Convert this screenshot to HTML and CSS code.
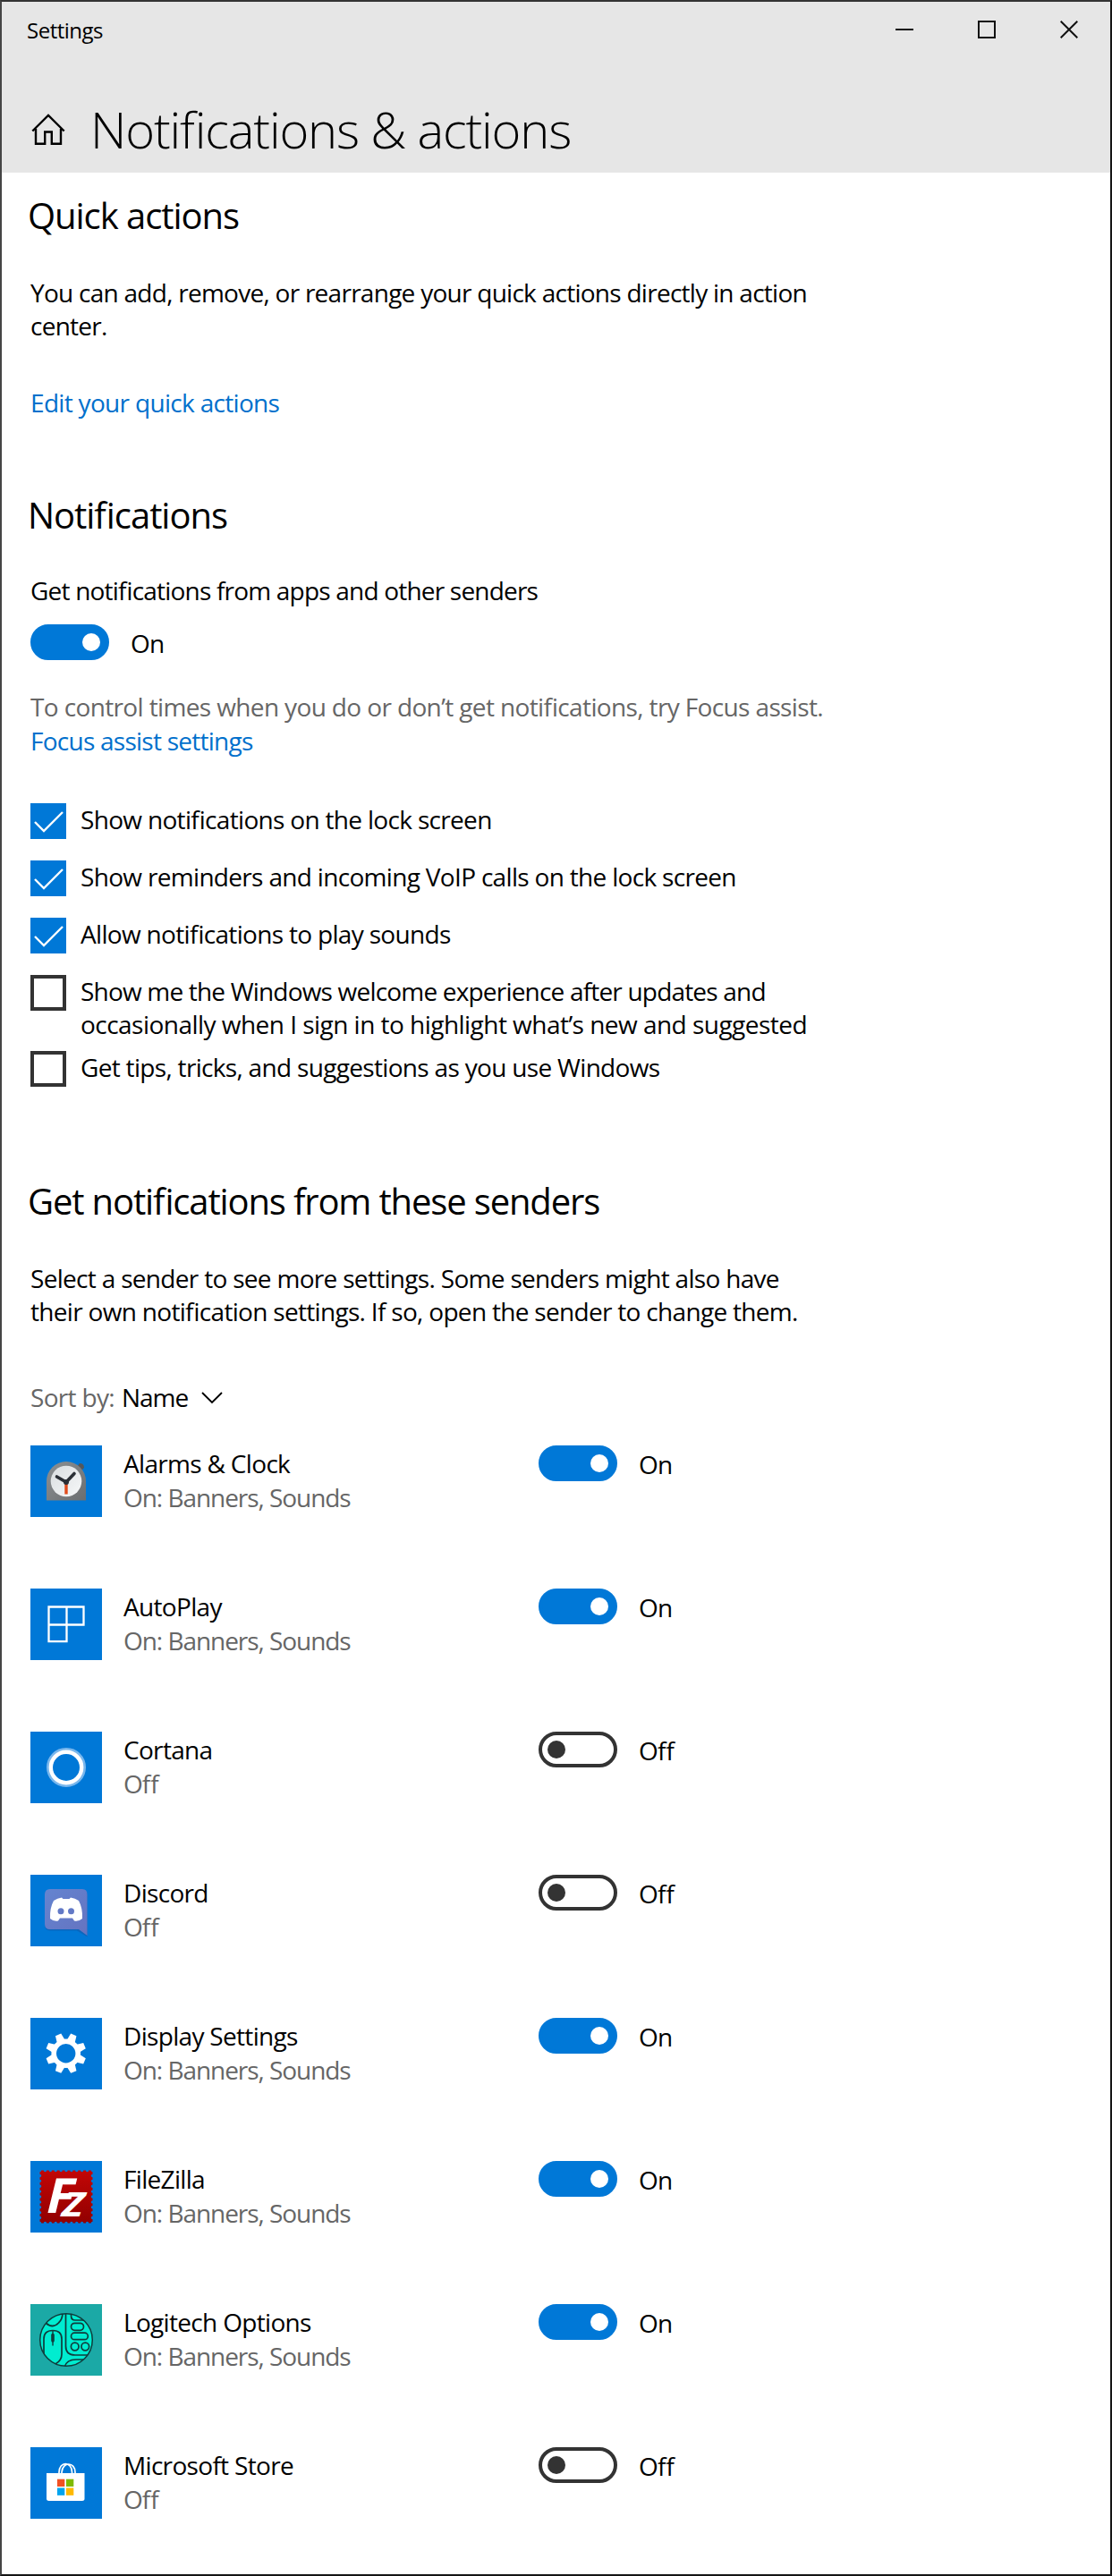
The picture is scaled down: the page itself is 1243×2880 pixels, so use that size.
FILE: index.html
```html
<!DOCTYPE html>
<html lang="en">
<head>
<meta charset="utf-8">
<title>Settings</title>
<link rel="stylesheet" href="styles.css">
</head>
<body>
<div class="window">
  <header class="header">
    <div class="titlebar">
      <span class="app-name">Settings</span>
      <div class="controls">
        <svg width="20" height="20" viewBox="0 0 20 20"><path d="M0 10H20"/></svg>
        <svg width="20" height="20" viewBox="0 0 20 20"><path d="M1 1H19V19H1Z"/></svg>
        <svg width="20" height="20" viewBox="0 0 20 20"><path d="M.7.7L19.3 19.3M19.3.7L.7 19.3"/></svg>
      </div>
    </div>
    <div class="page-title">
      <svg class="home" width="38" height="36" viewBox="0 0 38 36"><path d="M1.3 19.5L19 2L36.7 19.5M5 17V33.8H15.2V20.5H22.8V33.8H33V17"/></svg>
      <h1>Notifications &amp; actions</h1>
    </div>
  </header>
  <main class="content">
    <section class="quick">
      <h2>Quick actions</h2>
      <p class="lead">You can add, remove, or rearrange your quick actions directly in action<br>center.</p>
      <a class="link">Edit your quick actions</a>
    </section>
    <section class="notifications">
      <h2>Notifications</h2>
      <p class="label">Get notifications from apps and other senders</p>
      <div class="switch"><span class="toggle on"></span><span>On</span></div>
      <p class="hint">To control times when you do or don’t get notifications, try Focus assist.</p>
      <a class="link focus-link">Focus assist settings</a>
      <ul class="checks">
        <li><span class="box checked"><svg width="40" height="40" viewBox="0 0 40 40"><path d="M5 21L15 31L36 10"/></svg></span><span>Show notifications on the lock screen</span></li>
        <li><span class="box checked"><svg width="40" height="40" viewBox="0 0 40 40"><path d="M5 21L15 31L36 10"/></svg></span><span>Show reminders and incoming VoIP calls on the lock screen</span></li>
        <li><span class="box checked"><svg width="40" height="40" viewBox="0 0 40 40"><path d="M5 21L15 31L36 10"/></svg></span><span>Allow notifications to play sounds</span></li>
        <li class="two-line"><span class="box"></span><span><span class="tight">Show me the Windows welcome experience after updates and</span><br><span class="loose">occasionally when I sign in to highlight what’s new and suggested</span></span></li>
        <li><span class="box"></span><span>Get tips, tricks, and suggestions as you use Windows</span></li>
      </ul>
    </section>
    <section class="senders">
      <h2 class="senders-title">Get notifications from these senders</h2>
      <p class="senders-text">Select a sender to see more settings. Some senders might also have<br>their own notification settings. If so, open the sender to change them.</p>
      <div class="sort"><span class="muted">Sort by:</span><span class="sort-value">Name</span><svg width="24" height="14" viewBox="0 0 24 14"><path d="M1 1L12 12L23 1"/></svg></div>
      <ul class="list">
        <li>
          <svg class="icon" viewBox="0 0 80 80">
            <defs>
              <linearGradient id="case" x1="0" y1="0" x2="1" y2="1"><stop offset="0" stop-color="#8c9093"/><stop offset="1" stop-color="#6b6e70"/></linearGradient>
              <linearGradient id="face" x1="0" y1="0" x2="1" y2="1"><stop offset="0" stop-color="#d9dde0"/><stop offset="1" stop-color="#f7f8f9"/></linearGradient>
            </defs>
            <path d="M52 24L55 20Q60 20 60 25L56 29Z" fill="#53575b"/>
            <path d="M18 61.5V40A22 22 0 0 1 62 40V61.5Z" fill="url(#case)"/>
            <circle cx="40" cy="40" r="17.3" fill="url(#face)"/>
            <path d="M40 41V54.5" stroke="#e04a1a" stroke-width="3.4"/>
            <path d="M29.5 35L40 41L49 31.5" fill="none" stroke="#2b2f36" stroke-width="3.6" stroke-linecap="round"/>
            <circle cx="40" cy="41" r="3" fill="#2b2f36"/>
          </svg>
          <div class="info"><span>Alarms &amp; Clock</span><span class="status">On: Banners, Sounds</span></div>
          <div class="switch"><span class="toggle on"></span><span>On</span></div>
        </li>
        <li>
          <svg class="icon" viewBox="0 0 80 80"><path d="M20.5 20.5H59.5V40.5H20.5ZM20.5 40.5V59.2H40.5V20.5" fill="none" stroke="#fff" stroke-width="2.3"/></svg>
          <div class="info"><span>AutoPlay</span><span class="status">On: Banners, Sounds</span></div>
          <div class="switch"><span class="toggle on"></span><span>On</span></div>
        </li>
        <li>
          <svg class="icon" viewBox="0 0 80 80"><circle cx="40" cy="40" r="19.5" fill="none" stroke="#79b7ed" stroke-width="5"/><circle cx="40" cy="40" r="17.2" fill="none" stroke="#fff" stroke-width="4.4"/></svg>
          <div class="info"><span>Cortana</span><span class="status">Off</span></div>
          <div class="switch"><span class="toggle"></span><span>Off</span></div>
        </li>
        <li>
          <svg class="icon" viewBox="0 0 80 80">
            <defs><linearGradient id="chat" x1="0" y1="0" x2="1" y2="1"><stop offset="0" stop-color="#6484d0"/><stop offset="1" stop-color="#6573c0"/></linearGradient></defs>
            <path d="M22 17.5H58Q63.5 17.5 63.5 23V69.5L52 62.5H22Q16 62.5 16 56V23Q16 17.5 22 17.5Z" fill="#1458a8" opacity=".55"/>
            <path d="M22 16H58Q63.5 16 63.5 22V68L54 61H22Q16 61 16 55V22Q16 16 22 16Z" fill="url(#chat)"/>
            <path d="M26 29Q30 26 35 25.5L36.5 27H43.5L45 25.5Q50 26 54 29Q58.5 37 58 49Q54 52.5 49 51.5L47 48.5H33L31 51.5Q26 52.5 22 49Q21.5 37 26 29Z" fill="#fff"/>
            <circle cx="34" cy="40.8" r="3.5" fill="#6279c6"/><circle cx="45.5" cy="40.8" r="3.5" fill="#6279c6"/>
          </svg>
          <div class="info"><span>Discord</span><span class="status">Off</span></div>
          <div class="switch"><span class="toggle"></span><span>Off</span></div>
        </li>
        <li>
          <svg class="icon" viewBox="0 0 80 80">
            <circle cx="39.7" cy="39.7" r="13.5" fill="none" stroke="#fff" stroke-width="5.6"/>
            <g transform="translate(39.7 39.7)" fill="#fff">
              <path id="tooth" d="M-4.8-14L-3.4-22.5H3.4L4.8-14Z" transform="rotate(22.5)"/>
              <use href="#tooth" transform="rotate(45)"/><use href="#tooth" transform="rotate(90)"/><use href="#tooth" transform="rotate(135)"/><use href="#tooth" transform="rotate(180)"/><use href="#tooth" transform="rotate(225)"/><use href="#tooth" transform="rotate(270)"/><use href="#tooth" transform="rotate(315)"/>
            </g>
          </svg>
          <div class="info"><span>Display Settings</span><span class="status">On: Banners, Sounds</span></div>
          <div class="switch"><span class="toggle on"></span><span>On</span></div>
        </li>
        <li>
          <svg class="icon" viewBox="0 0 80 80">
            <defs><linearGradient id="stamp" x1="0" y1="0" x2="0" y2="1"><stop offset="0" stop-color="#c30606"/><stop offset="1" stop-color="#910000"/></linearGradient></defs>
            <rect x="10.5" y="10.5" width="59" height="59" fill="url(#stamp)"/>
            <rect x="10.6" y="10.6" width="58.8" height="58.8" fill="none" stroke="#0078d7" stroke-width="3.4" stroke-linecap="round" stroke-dasharray="0 5.88"/>
            <text transform="translate(18 58) skewX(-1)" class="fz" font-size="54" textLength="31" lengthAdjust="spacingAndGlyphs">F</text>
            <text transform="translate(34.5 61.5) skewX(-6)" class="fz" font-size="38" textLength="24" lengthAdjust="spacingAndGlyphs">Z</text>
          </svg>
          <div class="info"><span>FileZilla</span><span class="status">On: Banners, Sounds</span></div>
          <div class="switch"><span class="toggle on"></span><span>On</span></div>
        </li>
        <li>
          <svg class="icon teal" viewBox="0 0 80 80">
            <defs><clipPath id="disc"><circle cx="40" cy="40" r="29.5"/></clipPath></defs>
            <circle cx="40" cy="40" r="29.5" fill="#00ecd0"/>
            <g clip-path="url(#disc)" fill="none" stroke="#103c3c" stroke-width="1.7">
              <path d="M17 21Q25 28 31.5 21Q36 17 36 9M15 56V39Q15 29.5 25 29.5Q35 29.5 35 39V56Q35 63 28 67M39.5 9V47Q39.5 57 50 57H66M38 71Q40 62 51 62H64M45.5 9V13Q45.5 18 50 18H60"/>
              <rect x="45.5" y="21.3" width="14" height="8" rx="4"/><rect x="45.5" y="32.2" width="18.8" height="7.5" rx="3.7"/>
              <circle cx="49.7" cy="47.5" r="4.3"/><circle cx="61.3" cy="47.5" r="4.3"/>
            </g>
            <path d="M25 30V46.5" stroke="#103c3c" stroke-width="1.4"/><path d="M25 34.5V41" stroke="#103c3c" stroke-width="3.6" stroke-linecap="round"/>
            <circle cx="40" cy="40" r="29.3" fill="none" stroke="#103c3c" stroke-width="1.5"/>
          </svg>
          <div class="info"><span>Logitech Options</span><span class="status">On: Banners, Sounds</span></div>
          <div class="switch"><span class="toggle on"></span><span>On</span></div>
        </li>
        <li>
          <svg class="icon" viewBox="0 0 80 80">
            <path d="M32 30V28C32 15.5 46.5 15.5 46.5 28V30M35 30V28C36 15.5 50 16.5 50 28V30" fill="none" stroke="#fff" stroke-width="1.7"/>
            <path d="M18 29H60.5V57.5Q60.5 60 58 60H20.5Q18 60 18 57.5Z" fill="#fff"/>
            <path d="M30 35.7h8.3v8.3h-8.3z" fill="#f25022"/><path d="M40 35.7h8.3v8.3h-8.3z" fill="#7fba00"/><path d="M30 45.5h8.3v8.3h-8.3z" fill="#00a4ef"/><path d="M40 45.5h8.3v8.3h-8.3z" fill="#ffb900"/>
          </svg>
          <div class="info"><span>Microsoft Store</span><span class="status">Off</span></div>
          <div class="switch"><span class="toggle"></span><span>Off</span></div>
        </li>
      </ul>
    </section>
  </main>
</div>
</body>
</html>
```
FILE: styles.css
```css
* { box-sizing: border-box; margin: 0; padding: 0; }
body {
  width: 1243px;
  color: #000;
  font: 28px/37px "Open Sans", "Noto Sans", sans-serif;
  font-feature-settings: "liga" 1;
  letter-spacing: -0.68px;
  white-space: nowrap;
}
.window {
  height: 2880px;
  background: #fff;
  border: 2px solid #151515;
  border-top-color: #333;
  border-left-color: #454545;
}
.header { height: 191px; background: #e6e6e6; }
.titlebar { display: flex; justify-content: space-between; padding: 15px 36px 0 28px; height: 64px; }
.app-name { font-size: 24px; line-height: 33px; letter-spacing: -0.5px; }
.controls { display: flex; gap: 72px; padding-top: 6px; }
.controls svg { fill: none; stroke: #111; stroke-width: 2; }
.page-title { display: flex; gap: 28px; padding: 40px 0 0 33px; }
.home { margin-top: 21px; fill: none; stroke: #000; stroke-width: 2.4; }
h1 { font-size: 56px; line-height: 76px; font-weight: 340; letter-spacing: -1.15px; }
h2 { font-size: 40px; line-height: 54px; font-weight: 400; margin-left: -3px; letter-spacing: -1.05px; }
.content { padding: 21px 0 0 32px; }
.lead { margin-top: 41px; letter-spacing: -0.73px; }
.link { display: block; margin-top: 49px; color: #0070cc; }
.notifications { margin-top: 80px; }
.label { margin-top: 39px; letter-spacing: -0.8px; }
.switch { display: flex; gap: 24px; }
.toggle {
  display: flex;
  align-items: center;
  width: 88px;
  height: 40px;
  padding: 0 6px;
  border: 4px solid #333;
  border-radius: 20px;
}
.toggle::before { content: ""; width: 20px; height: 20px; border-radius: 50%; background: #333; }
.toggle.on { justify-content: flex-end; background: #0078d7; border-color: #0078d7; }
.toggle.on::before { background: #fff; }
.notifications > .switch { margin-top: 19px; }
.switch > span:last-child { padding-top: 3px; }
.hint { margin-top: 34px; color: #666; letter-spacing: -0.63px; }
.focus-link { margin-top: 1px; letter-spacing: -0.75px; }
.checks, .list { list-style: none; }
.checks { margin-top: 51px; }
.checks li { display: flex; gap: 16px; height: 64px; }
.checks li.two-line { height: 85px; }
.tight { letter-spacing: -0.81px; }
.loose { letter-spacing: -0.53px; }
.box { width: 40px; height: 40px; border: 4px solid #333; }
.box.checked { border: 0; background: #0078d7; }
.box svg { display: block; fill: none; stroke: #fff; stroke-width: 2.4; }
.senders { margin-top: 77px; }
.senders-title { letter-spacing: -1.15px; }
.senders-text { margin-top: 41px; letter-spacing: -0.69px; }
.sort { display: flex; gap: 8px; align-items: center; margin-top: 59px; }
.sort-value { letter-spacing: -1px; }
.sort svg { margin-left: 7px; fill: none; stroke: #000; stroke-width: 1.8; }
.muted, .status { color: #666; }
.status { letter-spacing: -1.05px; }
.list { margin-top: 35px; }
.list li { display: grid; grid-template-columns: 80px 440px auto; column-gap: 24px; height: 160px; }
.icon { display: block; width: 80px; height: 80px; background: #0078d7; }
.icon.teal { background: #1ba9a6; }
.info { display: flex; flex-direction: column; line-height: 38px; padding-top: 1px; }
.fz { font-family: "Open Sans", sans-serif; font-weight: 700; font-style: italic; fill: #fff; letter-spacing: 0; }
```
